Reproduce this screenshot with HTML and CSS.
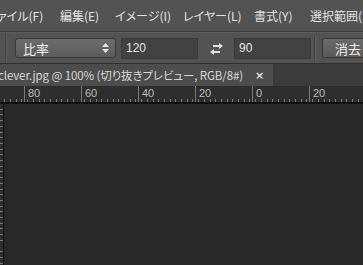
FILE: index.html
```html
<!DOCTYPE html>
<html lang="ja">
<head>
<meta charset="UTF-8" />
<meta name="viewport" content="width=device-width, initial-scale=1" />
<title>Photoshop</title>
<link rel="stylesheet" href="styles.css">
</head>
<body>

<div class="menubar">
  <span class="menu m-file">ファイル(F)</span>
  <span class="menu m-edit">編集(E)</span>
  <span class="menu m-image">イメージ(I)</span>
  <span class="menu m-layer">レイヤー(L)</span>
  <span class="menu m-type">書式(Y)</span>
  <span class="menu">選択範囲(S)</span>
</div>

<div class="options">
  <div class="grip"></div>
  <div class="select">
    <span>比率</span>
    <svg width="7" height="10" viewBox="0 0 7 10"><path d="M3.5 0 L7 4 L0 4 Z M0 6 L7 6 L3.5 10 Z" fill="#e6e6e6"/></svg>
  </div>
  <div class="field w120">120</div>
  <div class="swap">
    <svg width="15" height="12" viewBox="0 0 15 12">
      <path d="M4 3 H11" stroke="#e0e0e0" stroke-width="2"/>
      <path d="M10 0 L14 3 L10 6 Z" fill="#e0e0e0"/>
      <path d="M4 9 H11" stroke="#e0e0e0" stroke-width="2"/>
      <path d="M5 6 L1 9 L5 12 Z" fill="#e0e0e0"/>
    </svg>
  </div>
  <div class="field w90">90</div>
  <div class="sep"></div>
  <div class="btn">消去</div>
</div>

<div class="tabs">
  <div class="tab">
    <span class="tab-title">clever.jpg @ 100% (切り抜きプレビュー, RGB/8#)</span>
    <span class="close">×</span>
  </div>
</div>

<div class="ruler">
  <div class="seg"><span>100</span></div>
  <div class="seg"><span>80</span></div>
  <div class="seg"><span>60</span></div>
  <div class="seg"><span>40</span></div>
  <div class="seg"><span>20</span></div>
  <div class="seg"><span>0</span></div>
  <div class="seg"><span>20</span></div>
</div>

<div class="workspace">
  <div class="vruler"></div>
  <div class="canvas"></div>
</div>

</body>
</html>
```

FILE: styles.css
```css
body {
  margin: 0;
  width: 363px;
  height: 265px;
  overflow: hidden;
  display: flex;
  flex-direction: column;
  background: #282828;
  font-family: "Noto Sans CJK JP", "Liberation Sans", sans-serif;
  font-size: 12px;
  color: #e2e2e2;
  font-feature-settings: "palt";
}
.menubar {
  flex-shrink: 0;
  height: 31px;
  background: #535353;
  display: flex;
  align-items: center;
  white-space: nowrap;
  border-bottom: 1px solid #3e3e3e;
  overflow: hidden;
}
.menu {
  flex: 0 0 auto;
  font-size: 12px;
  color: #e4e4e4;
}
.m-file {
  width: 73px;
  margin-left: -13px;
}
.m-edit {
  width: 55px;
}
.m-image {
  width: 68px;
}
.m-layer {
  width: 71px;
}
.m-type {
  width: 56px;
}
.options {
  flex-shrink: 0;
  height: 30px;
  background: #535353;
  border-top: 1px solid #5e5e5e;
  border-bottom: 1px solid #2f2f2f;
  display: flex;
  align-items: center;
  overflow: hidden;
}
.options > div {
  flex-shrink: 0;
}
.grip {
  width: 1px;
  height: 30px;
  margin-left: 5px;
  background: #424242;
  border-right: 1px solid #5e5e5e;
}
.select {
  width: 86px;
  height: 18px;
  margin-left: 8px;
  padding: 0 6px 0 7px;
  display: flex;
  align-items: center;
  justify-content: space-between;
  background: linear-gradient(#6c6c6c, #5c5c5c);
  border: 1px solid #3a3a3a;
  border-radius: 3px;
  font-size: 13px;
  color: #f0f0f0;
}
.field {
  height: 19px;
  display: flex;
  align-items: center;
  padding-left: 4px;
  background: #424242;
  border: 1px solid #3a3a3a;
  color: #e6e6e6;
  font-family: "Liberation Sans", sans-serif;
  font-size: 12px;
}
.w120 {
  width: 71px;
  margin-left: 5px;
}
.w90 {
  width: 71px;
}
.swap {
  width: 36px;
  display: flex;
  justify-content: center;
  padding-top: 1px;
}
.sep {
  width: 1px;
  height: 26px;
  margin: 4px 5px 0 3px;
  background: #3e3e3e;
  border-right: 1px solid #636363;
  align-self: flex-end;
}
.btn {
  width: 40px;
  height: 18px;
  margin-left: 1px;
  padding-left: 12px;
  display: flex;
  align-items: center;
  background: linear-gradient(#6a6a6a, #5a5a5a);
  border: 1px solid #363636;
  border-radius: 2px;
  color: #f0f0f0;
  font-size: 13px;
}
.tabs {
  flex-shrink: 0;
  height: 22px;
  background: #3b3b3b;
  display: flex;
}
.tab {
  width: 273px;
  flex-shrink: 0;
  background: #4d4d4d;
  display: flex;
  align-items: center;
  white-space: nowrap;
  overflow: hidden;
}
.tab-title {
  flex: 0 1 auto;
  overflow: hidden;
  margin-left: -2px;
  font-size: 11.5px;
  letter-spacing: -0.1px;
  color: #d8d8d8;
}
.close {
  flex-shrink: 0;
  margin-left: 12px;
  font-family: "DejaVu Sans", sans-serif;
  font-size: 11px;
  font-weight: bold;
  color: #e0e0e0;
}
.ruler {
  flex-shrink: 0;
  height: 16px;
  background-color: #2e2e2e;
  background-image: repeating-linear-gradient(90deg, transparent 0, transparent 4.7px, #7a7a7a 4.7px, #7a7a7a 5.7px);
  background-size: 100% 3px;
  background-position: 27px 100%;
  background-repeat: repeat-x;
  border-bottom: 2px solid #111;
  display: flex;
  margin-left: -33px;
  overflow: hidden;
}
.seg {
  flex: 0 0 57px;
  box-sizing: border-box;
  border-left: 1px solid #7a7a7a;
  padding: 1px 0 0 3px;
  font-family: "Liberation Sans", sans-serif;
  font-size: 11px;
  color: #bdbdbd;
  line-height: 12px;
}
.workspace {
  flex: 1;
  display: flex;
}
.vruler {
  width: 3px;
  background-color: #2e2e2e;
  background-image: repeating-linear-gradient(180deg, transparent 0, transparent 4.7px, #7a7a7a 4.7px, #7a7a7a 5.7px);
  border-right: 1px solid #111;
}
.canvas {
  flex: 1;
  background: #282828;
}
```
